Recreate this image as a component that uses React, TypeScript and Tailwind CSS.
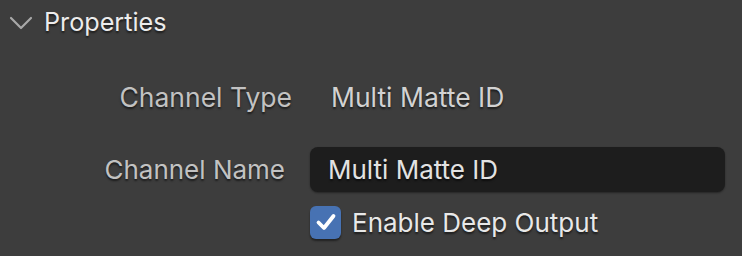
import React, { useState } from "react";

const shadow = "[text-shadow:0_2px_2px_rgba(0,0,0,0.55)]";

const App: React.FC = () => {
  const [deep, setDeep] = useState(true);
  const [name, setName] = useState("Multi Matte ID");

  return (
    <div
      className="w-[742px] h-[256px] bg-[#3d3d3d] overflow-hidden"
      style={{ fontFamily: "Inter, 'Noto Sans', sans-serif" }}
    >
      {/* panel header */}
      <div className="flex items-center h-[44px] pl-[9px]">
        <svg width="24" height="14" viewBox="0 0 24 14" className="mt-[2px]">
          <path
            d="M2 2 L12 12 L22 2"
            fill="none"
            stroke="#a8a8a8"
            strokeWidth="2.2"
            strokeLinecap="round"
            strokeLinejoin="round"
          />
        </svg>
        <span className={`ml-[11px] mt-[1px] text-[25.2px] text-[#ececec] ${shadow}`}>
          Properties
        </span>
      </div>

      {/* channel type */}
      <div className="flex items-center h-[50px] mt-[29px]">
        <div className={`w-[292px] text-right text-[26.5px] text-[#c2c2c2] ${shadow}`}>
          Channel Type
        </div>
        <div className={`ml-[39px] text-[26.5px] text-[#d2d2d2] ${shadow}`}>
          Multi Matte ID
        </div>
      </div>

      {/* channel name */}
      <div className="flex items-center h-[46px] mt-[23px]">
        <div className={`w-[285px] text-right text-[26px] text-[#c2c2c2] ${shadow}`}>
          Channel Name
        </div>
        <input
          value={name}
          onChange={(e) => setName(e.target.value)}
          className={`ml-[25px] w-[415px] h-[45px] rounded-[8px] bg-[#1d1d1d] pl-[18px] text-[26px] text-[#e2e2e2] outline-none shadow-[0_1px_2px_rgba(0,0,0,0.4)] ${shadow}`}
        />
      </div>

      {/* checkbox */}
      <label className="flex items-center h-[36px] mt-[12px] ml-[310px] cursor-pointer">
        <button
          onClick={() => setDeep(!deep)}
          className={`w-[31px] h-[33px] rounded-[6px] flex items-center justify-center shadow-[0_2px_2px_rgba(0,0,0,0.45)] ${
            deep ? "bg-[#4772b3]" : "bg-[#545454]"
          }`}
        >
          {deep && (
            <svg width="24" height="24" viewBox="0 0 24 24">
              <path
                d="M4.5 12.5 L10 18 L19.5 6"
                fill="none"
                stroke="#ffffff"
                strokeWidth="3.8"
                strokeLinecap="round"
                strokeLinejoin="round"
              />
            </svg>
          )}
        </button>
        <span className={`ml-[11px] text-[26px] text-[#e8e8e8] ${shadow}`}>
          Enable Deep Output
        </span>
      </label>
    </div>
  );
};

export default App;
